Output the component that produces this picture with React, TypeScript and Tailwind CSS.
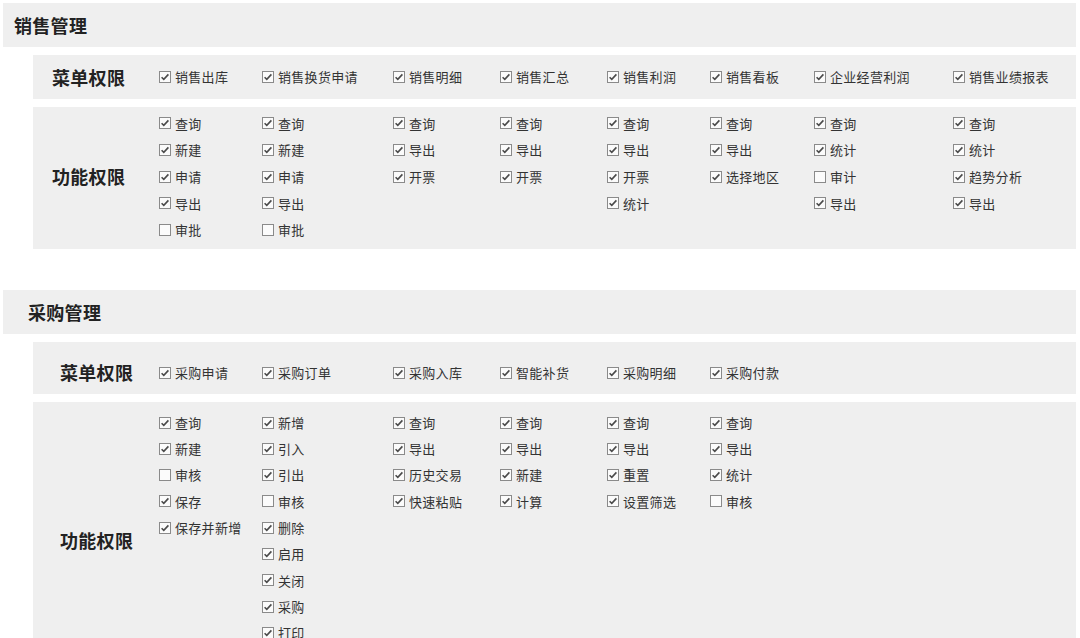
import React from "react";

type Section = {
  title: string;
  titlePad: string;
  labelPad: string;
  menuRow: string;
  funcRow: string;
  itemH: string;
  menus: string[];
  funcs: string[][];
};

// "-" prefix marks an unchecked permission
const sections: Section[] = [
  {
    title: "销售管理",
    titlePad: "pl-[11px]",
    labelPad: "pl-[19px]",
    menuRow: "h-[44px]",
    funcRow: "pt-[3px] pb-[6px]",
    itemH: "h-[26.7px]",
    menus: ["销售出库", "销售换货申请", "销售明细", "销售汇总", "销售利润", "销售看板", "企业经营利润", "销售业绩报表"],
    funcs: [
      ["查询", "新建", "申请", "导出", "-审批"],
      ["查询", "新建", "申请", "导出", "-审批"],
      ["查询", "导出", "开票"],
      ["查询", "导出", "开票"],
      ["查询", "导出", "开票", "统计"],
      ["查询", "导出", "选择地区"],
      ["查询", "统计", "-审计", "导出"],
      ["查询", "统计", "趋势分析", "导出"],
    ],
  },
  {
    title: "采购管理",
    titlePad: "pl-[25px]",
    labelPad: "pl-[27px]",
    menuRow: "h-[52px] pt-[9px]",
    funcRow: "pt-[7px] pb-[5px]",
    itemH: "h-[26.3px]",
    menus: ["采购申请", "采购订单", "采购入库", "智能补货", "采购明细", "采购付款"],
    funcs: [
      ["查询", "新建", "-审核", "保存", "保存并新增"],
      ["新增", "引入", "引出", "-审核", "删除", "启用", "关闭", "采购", "打印", "导出"],
      ["查询", "导出", "历史交易", "快速粘贴"],
      ["查询", "导出", "新建", "计算"],
      ["查询", "导出", "重置", "设置筛选"],
      ["查询", "导出", "统计", "-审核"],
    ],
  },
];

const cols = "grid grid-cols-[103px_131px_107px_107px_103px_104px_139px_1fr]";

function Box({ checked }: { checked: boolean }) {
  return (
    <svg width="12" height="12" viewBox="0 0 12 12" className="shrink-0">
      <rect x="0.5" y="0.5" width="11" height="11" fill="#fbfbfb" stroke="#8a8a8a" />
      {checked && <path d="M2.6 6.2 L4.8 8.4 L9.4 3.4" fill="none" stroke="#4a4a4a" strokeWidth="1.6" />}
    </svg>
  );
}

function Item({ text, h }: { text: string; h?: string }) {
  const off = text.startsWith("-");
  return (
    <div className={`flex items-center gap-[4px] ${h ?? ""}`}>
      <Box checked={!off} />
      <span className="whitespace-nowrap">{off ? text.slice(1) : text}</span>
    </div>
  );
}

export default function App() {
  return (
    <div
      className="min-h-screen bg-white pt-[3px] pl-[3px] pr-[4px] text-[13px] tracking-[0.3px] text-[#333]"
      style={{ fontFamily: '"Noto Sans CJK SC", "Noto Sans", sans-serif' }}
    >
      {sections.map((s, i) => (
        <div key={s.title} className={i > 0 ? "mt-[41px]" : ""}>
          <div className={`flex h-[44px] items-center bg-[#efefef] ${s.titlePad} text-[18px] font-bold text-[#222]`}>
            {s.title}
          </div>
          <div className="ml-[30px] mt-[8px] flex flex-col gap-[8px]">
            <div className={`flex items-center bg-[#efefef] ${s.menuRow}`}>
              <div className={`w-[126px] shrink-0 ${s.labelPad} text-[18px] font-bold text-[#222]`}>菜单权限</div>
              <div className={`${cols} flex-1`}>
                {s.menus.map((m) => (
                  <Item key={m} text={m} />
                ))}
              </div>
            </div>
            <div className={`flex items-center bg-[#efefef] ${s.funcRow}`}>
              <div className={`w-[126px] shrink-0 ${s.labelPad} text-[18px] font-bold text-[#222]`}>功能权限</div>
              <div className={`${cols} flex-1 items-start`}>
                {s.funcs.map((col, ci) => (
                  <div key={ci} className="flex flex-col">
                    {col.map((f, fi) => (
                      <Item key={fi} text={f} h={s.itemH} />
                    ))}
                  </div>
                ))}
              </div>
            </div>
          </div>
        </div>
      ))}
    </div>
  );
}
